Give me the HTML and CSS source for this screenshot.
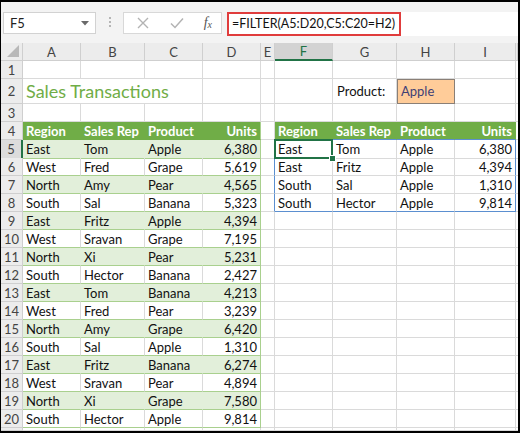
FILE: index.html
```html
<!DOCTYPE html>
<html lang="en">
<head>
  <meta charset="UTF-8" />
  <title>FILTER function</title>
  <link rel="stylesheet" href="styles.css">
</head>
<body>
  <div class="sheet">

    <!-- Barra de fórmulas -->
    <div class="fbar">
      <div class="namebox">
        <span>F5</span>
        <svg class="drop" width="8" height="5" viewBox="0 0 8 5"><path d="M0 0h8L4 4.5z" fill="#6a6a6a"/></svg>
      </div>
      <div class="dots"><i></i><i></i><i></i></div>
      <div class="iconbox">
        <svg width="14" height="14" viewBox="0 0 14 14"><path d="M2 2L12 12M12 2L2 12" stroke="#b3b3b3" stroke-width="1.4" fill="none"/></svg>
        <svg width="16" height="14" viewBox="0 0 16 14"><path d="M2 7.5L6 11.5L14 2.5" stroke="#b3b3b3" stroke-width="1.5" fill="none"/></svg>
        <span class="fx">f<sub>x</sub></span>
      </div>
      <div class="formula">
        <span class="ftext">=FILTER(A5:D20,C5:C20=H2)</span>
      </div>
    </div>

    <!-- Cabeceras de columna -->
    <div class="row colhead">
      <div class="corner"><svg width="12" height="12" viewBox="0 0 12 12"><path d="M12 0V12H0z" fill="#b8b8b8"/></svg></div>
      <div class="ch">A</div><div class="ch">B</div><div class="ch">C</div><div class="ch">D</div><div class="ch">E</div>
      <div class="ch sel">F</div><div class="ch">G</div><div class="ch">H</div><div class="ch">I</div><div class="ch"></div>
    </div>

    <div class="row">
      <div class="rh">1</div>
      <div class="c"></div><div class="c"></div><div class="c"></div><div class="c"></div><div class="c"></div>
      <div class="c"></div><div class="c"></div><div class="c"></div><div class="c"></div><div class="c"></div>
    </div>

    <div class="row tall">
      <div class="rh">2</div>
      <div class="c title">Sales Transactions</div><div class="c"></div><div class="c"></div>
      <div class="c"></div><div class="c label">Product:</div><div class="c input">Apple</div><div class="c"></div><div class="c"></div>
    </div>

    <div class="row">
      <div class="rh">3</div>
      <div class="c"></div><div class="c"></div><div class="c"></div><div class="c"></div><div class="c"></div>
      <div class="c"></div><div class="c"></div><div class="c"></div><div class="c"></div><div class="c"></div>
    </div>

    <div class="row">
      <div class="rh">4</div>
      <div class="c h">Region</div><div class="c h">Sales Rep</div><div class="c h">Product</div><div class="c h n last">Units</div>
      <div class="c"></div>
      <div class="c h sp">Region</div><div class="c h sp">Sales Rep</div><div class="c h sp">Product</div><div class="c h n sp">Units</div>
      <div class="c"></div>
    </div>

    <div class="row">
      <div class="rh sel">5</div>
      <div class="c g">East</div><div class="c g">Tom</div><div class="c g">Apple</div><div class="c g n last">6,380</div>
      <div class="c spl"></div>
      <div class="c active">East</div><div class="c">Tom</div><div class="c">Apple</div><div class="c n spr">6,380</div>
      <div class="c"></div>
    </div>
    <div class="row">
      <div class="rh">6</div>
      <div class="c w">West</div><div class="c w">Fred</div><div class="c w">Grape</div><div class="c w n last">5,619</div>
      <div class="c spl"></div>
      <div class="c">East</div><div class="c">Fritz</div><div class="c">Apple</div><div class="c n spr">4,394</div>
      <div class="c"></div>
    </div>
    <div class="row">
      <div class="rh">7</div>
      <div class="c g">North</div><div class="c g">Amy</div><div class="c g">Pear</div><div class="c g n last">4,565</div>
      <div class="c spl"></div>
      <div class="c">South</div><div class="c">Sal</div><div class="c">Apple</div><div class="c n spr">1,310</div>
      <div class="c"></div>
    </div>
    <div class="row">
      <div class="rh">8</div>
      <div class="c w">South</div><div class="c w">Sal</div><div class="c w">Banana</div><div class="c w n last">5,323</div>
      <div class="c spl"></div>
      <div class="c spb">South</div><div class="c spb">Hector</div><div class="c spb">Apple</div><div class="c n spr spb">9,814</div>
      <div class="c"></div>
    </div>
    <div class="row">
      <div class="rh">9</div>
      <div class="c g">East</div><div class="c g">Fritz</div><div class="c g">Apple</div><div class="c g n last">4,394</div>
      <div class="c"></div><div class="c"></div><div class="c"></div><div class="c"></div><div class="c"></div><div class="c"></div>
    </div>
    <div class="row">
      <div class="rh">10</div>
      <div class="c w">West</div><div class="c w">Sravan</div><div class="c w">Grape</div><div class="c w n last">7,195</div>
      <div class="c"></div><div class="c"></div><div class="c"></div><div class="c"></div><div class="c"></div><div class="c"></div>
    </div>
    <div class="row">
      <div class="rh">11</div>
      <div class="c g">North</div><div class="c g">Xi</div><div class="c g">Pear</div><div class="c g n last">5,231</div>
      <div class="c"></div><div class="c"></div><div class="c"></div><div class="c"></div><div class="c"></div><div class="c"></div>
    </div>
    <div class="row">
      <div class="rh">12</div>
      <div class="c w">South</div><div class="c w">Hector</div><div class="c w">Banana</div><div class="c w n last">2,427</div>
      <div class="c"></div><div class="c"></div><div class="c"></div><div class="c"></div><div class="c"></div><div class="c"></div>
    </div>
    <div class="row">
      <div class="rh">13</div>
      <div class="c g">East</div><div class="c g">Tom</div><div class="c g">Banana</div><div class="c g n last">4,213</div>
      <div class="c"></div><div class="c"></div><div class="c"></div><div class="c"></div><div class="c"></div><div class="c"></div>
    </div>
    <div class="row">
      <div class="rh">14</div>
      <div class="c w">West</div><div class="c w">Fred</div><div class="c w">Pear</div><div class="c w n last">3,239</div>
      <div class="c"></div><div class="c"></div><div class="c"></div><div class="c"></div><div class="c"></div><div class="c"></div>
    </div>
    <div class="row">
      <div class="rh">15</div>
      <div class="c g">North</div><div class="c g">Amy</div><div class="c g">Grape</div><div class="c g n last">6,420</div>
      <div class="c"></div><div class="c"></div><div class="c"></div><div class="c"></div><div class="c"></div><div class="c"></div>
    </div>
    <div class="row">
      <div class="rh">16</div>
      <div class="c w">South</div><div class="c w">Sal</div><div class="c w">Apple</div><div class="c w n last">1,310</div>
      <div class="c"></div><div class="c"></div><div class="c"></div><div class="c"></div><div class="c"></div><div class="c"></div>
    </div>
    <div class="row">
      <div class="rh">17</div>
      <div class="c g">East</div><div class="c g">Fritz</div><div class="c g">Banana</div><div class="c g n last">6,274</div>
      <div class="c"></div><div class="c"></div><div class="c"></div><div class="c"></div><div class="c"></div><div class="c"></div>
    </div>
    <div class="row">
      <div class="rh">18</div>
      <div class="c w">West</div><div class="c w">Sravan</div><div class="c w">Pear</div><div class="c w n last">4,894</div>
      <div class="c"></div><div class="c"></div><div class="c"></div><div class="c"></div><div class="c"></div><div class="c"></div>
    </div>
    <div class="row">
      <div class="rh">19</div>
      <div class="c g">North</div><div class="c g">Xi</div><div class="c g">Grape</div><div class="c g n last">7,580</div>
      <div class="c"></div><div class="c"></div><div class="c"></div><div class="c"></div><div class="c"></div><div class="c"></div>
    </div>
    <div class="row">
      <div class="rh">20</div>
      <div class="c w">South</div><div class="c w">Hector</div><div class="c w">Apple</div><div class="c w n last">9,814</div>
      <div class="c"></div><div class="c"></div><div class="c"></div><div class="c"></div><div class="c"></div><div class="c"></div>
    </div>
    <div class="row stub">
      <div class="rh"></div>
      <div class="c"></div><div class="c"></div><div class="c"></div><div class="c"></div><div class="c"></div>
      <div class="c"></div><div class="c"></div><div class="c"></div><div class="c"></div><div class="c"></div>
    </div>

  </div>
</body>
</html>
```

FILE: styles.css
```css
body {
  margin: 0;
  background: #fff;
  font-family: Lato, "Liberation Sans", sans-serif;
}
.sheet {
  width: 520px;
  height: 433px;
  box-sizing: border-box;
  border: 2px solid #000;
  border-left-width: 1px;
  overflow: hidden;
  background: #fff;
}

/* barra de fórmulas */
.fbar {
  height: 41px;
  background: #f3f3f3;
  display: flex;
  align-items: flex-start;
  padding-top: 10px;
  box-sizing: border-box;
  padding-left: 2px;
}
.namebox {
  width: 93px;
  height: 22px;
  box-sizing: border-box;
  background: #fff;
  border: 1px solid #d2d2d2;
  display: flex;
  align-items: center;
  justify-content: space-between;
  padding: 0 6px 0 6px;
  font-size: 13px;
  color: #222;
}
.dots {
  width: 27px;
  display: flex;
  flex-direction: column;
  align-items: center;
  gap: 2px;
  padding-top: 5px;
}
.dots i {
  width: 2px;
  height: 2px;
  background: #b5b5b5;
}
.iconbox {
  width: 99px;
  height: 22px;
  box-sizing: border-box;
  background: #fff;
  border: 1px solid #d8d8d8;
  display: flex;
  align-items: center;
  justify-content: space-between;
  padding: 0 9px 0 12px;
}
.fx {
  font-family: "Liberation Serif", serif;
  font-style: italic;
  font-size: 14px;
  color: #555;
}
.fx sub {
  font-size: 10px;
  vertical-align: -1px;
}
.formula {
  flex: 1;
  margin-left: 5px;
  height: 24px;
  background: #fff;
  display: flex;
}
.ftext {
  border: 2px solid #e03c3c;
  padding: 0 4px 0 3px;
  font-size: 12.5px;
  line-height: 19px;
  color: #111;
}

/* cuadrícula */
.row {
  display: grid;
  grid-template-columns: 22px 58px 64px 58px 58px 14px 58px 64px 58px 61px 2px;
  height: 18px;
}
.row.tall {
  height: 25px;
}
.row.stub {
  height: 3px;
}
.colhead {
  background: #ececec;
  color: #444;
  font-size: 13px;
}
.corner,
.ch,
.rh {
  box-sizing: border-box;
  border-right: 1px solid #cfcfcf;
  border-bottom: 1px solid #cfcfcf;
  background: #ececec;
  display: flex;
  align-items: center;
  justify-content: center;
}
.corner {
  align-items: flex-end;
  justify-content: flex-end;
  padding: 0 3px 3px 0;
}
.ch.sel {
  background: #d3d3d3;
  color: #217346;
  border-bottom: 2px solid #217346;
}
.rh {
  font-size: 13px;
  color: #444;
}
.rh.sel {
  background: #dcdcdc;
  border-right: 2px solid #217346;
}
.c {
  box-sizing: border-box;
  border-right: 1px solid #dadada;
  border-bottom: 1px solid #dadada;
  padding: 0 3px;
  font-size: 13px;
  line-height: 18px;
  color: #111;
  white-space: nowrap;
  overflow: hidden;
}
.n {
  text-align: right;
}
.tall .c {
  line-height: 24px;
}
.c.title {
  grid-column: span 3;
  font-size: 18px;
  color: #70ad47;
  overflow: visible;
}
.c.label {
  padding-left: 4px;
}
.c.input {
  background: #ffcc99;
  border: 1px solid #8a7f76;
  color: #3f3f76;
  line-height: 22px;
}

/* tablas */
.c.h {
  background: #70ad47;
  border-color: #70ad47;
  color: #fff;
  font-weight: bold;
}
.c.g {
  background: #e2efda;
  border-right-color: #e2efda;
  border-bottom-color: #a9d08e;
}
.c.w {
  border-bottom-color: #a9d08e;
}
.c.last {
  border-right-color: #a9d08e;
}
.c.h.sp {
  border-bottom-color: #5b8fd0;
}
.c.spl,
.c.spr {
  border-right-color: #5b8fd0;
}
.c.spb {
  border-bottom-color: #5b8fd0;
}
.c.active {
  position: relative;
  overflow: visible;
}
.c.active::after {
  content: "";
  position: absolute;
  left: -1px;
  top: -1px;
  right: -1px;
  bottom: -1px;
  border: 2px solid #217346;
}
.c.active::before {
  content: "";
  position: absolute;
  right: -4px;
  bottom: -4px;
  width: 5px;
  height: 5px;
  background: #217346;
  border: 1px solid #fff;
  z-index: 1;
}
```
